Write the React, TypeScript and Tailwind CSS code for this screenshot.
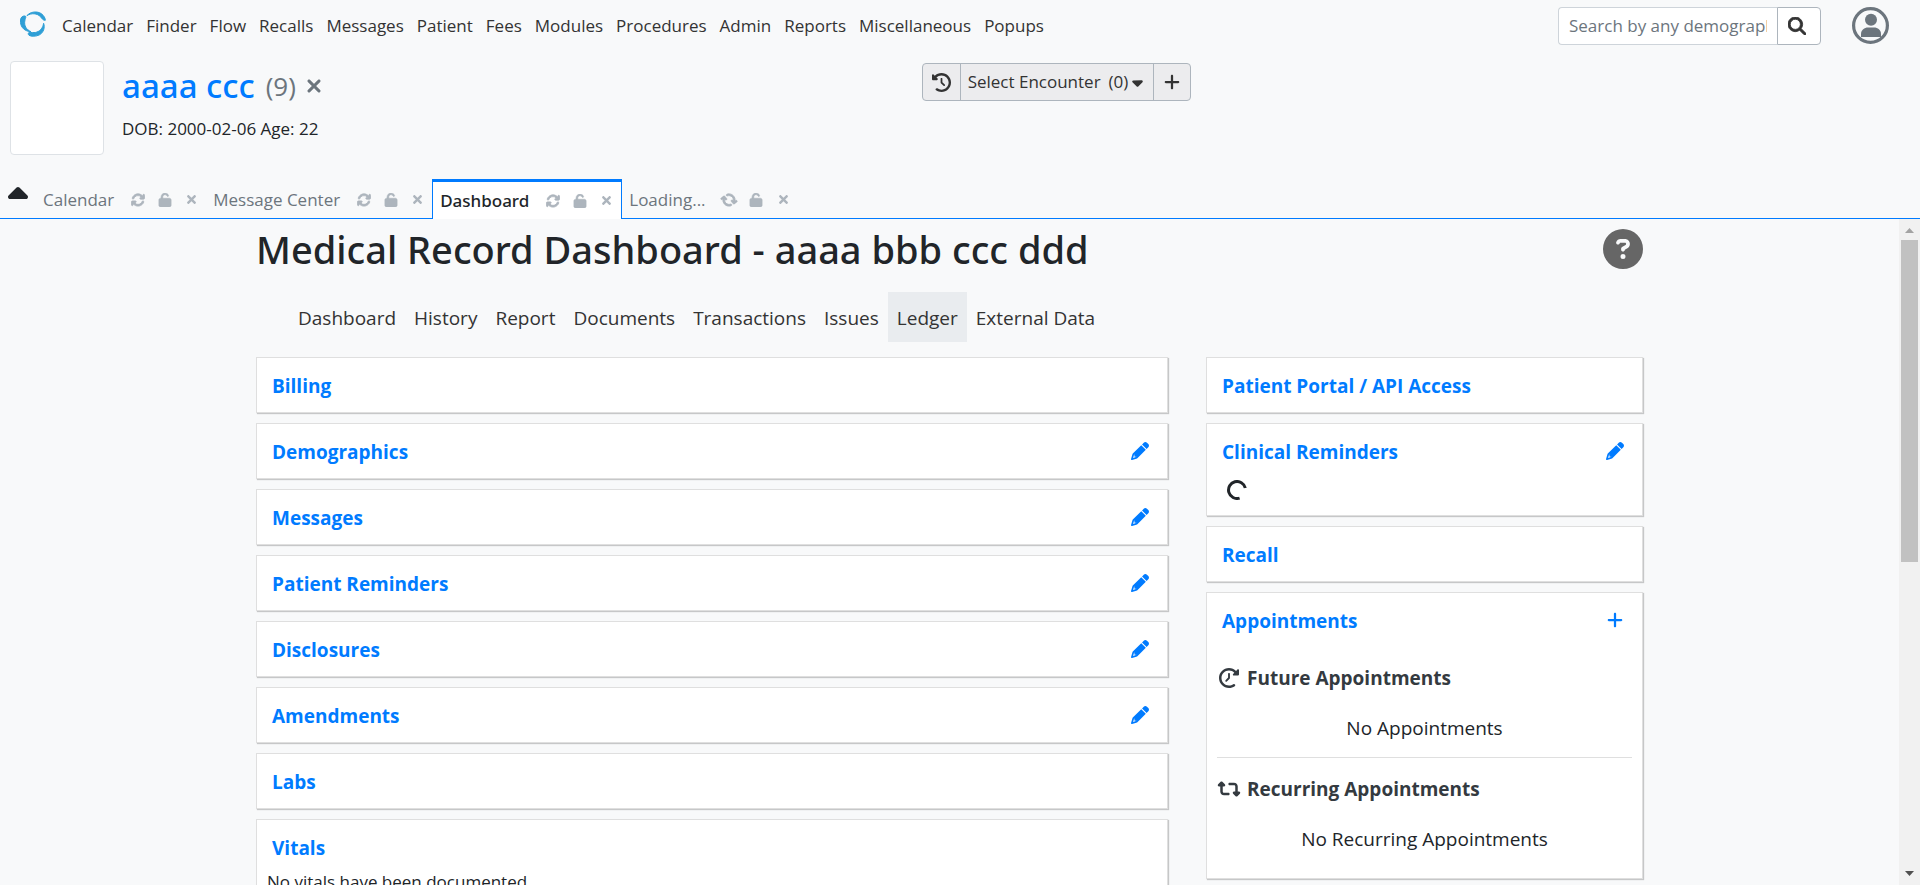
import React from "react";
import { FaTimes } from "react-icons/fa";
import {
  FaArrowsRotate,
  FaCaretDown,
  FaCaretUp,
  FaCircleQuestion,
  FaClockRotateLeft,
  FaMagnifyingGlass,
  FaPlus,
  FaRetweet,
  FaUnlock,
  FaXmark,
} from "react-icons/fa6";

const menuItems = [
  "Calendar", "Finder", "Flow", "Recalls", "Messages", "Patient", "Fees",
  "Modules", "Procedures", "Admin", "Reports", "Miscellaneous", "Popups",
];

const tabs = [
  { label: "Calendar", active: false, loading: false },
  { label: "Message Center", active: false, loading: false },
  { label: "Dashboard", active: true, loading: false },
  { label: "Loading...", active: false, loading: true },
];

const sections = [
  "Dashboard", "History", "Report", "Documents", "Transactions", "Issues", "Ledger", "External Data",
];

const leftCards = [
  { title: "Billing", editable: false },
  { title: "Demographics", editable: true },
  { title: "Messages", editable: true },
  { title: "Patient Reminders", editable: true },
  { title: "Disclosures", editable: true },
  { title: "Amendments", editable: true },
  { title: "Labs", editable: false },
];

function Logo() {
  return (
    <svg viewBox="0 0 26 26" className="mb-1 size-[26px] shrink-0 fill-[#2f9fd6] stroke-[#2f9fd6] stroke-1" aria-hidden="true">
      <path d="M7 4.600C10 .600 17.500-.200 21.500 2.800C24 4.800 25.400 7.400 25.300 9.300C23 9.500 22.300 7.800 20.500 5.700C17.300 2.200 11.300 1.800 7 4.600Z" />
      <path d="M3.800 5C1.200 5.300 .200 7.900.500 11.500C.900 16.500 4.800 20.400 11 20.700C6.200 18.600 4 14.600 4.800 10C5.100 7.900 6 6.600 5.800 5.500C5.500 4.900 4.600 4.900 3.800 5Z" />
      <path d="M23.600 12.300C25.200 16.300 23.600 21.600 19.500 23.800C16 25.700 11 25.600 9 24.300C7.700 23.200 8.200 21.400 9.700 21.300C11.500 21.300 13 21.900 15.300 21.500C19.800 20.600 22.900 17.300 23.600 12.300Z" />
    </svg>
  );
}

function Avatar() {
  return (
    <svg viewBox="0 0 37 37" className="size-[37px]" aria-hidden="true">
      <circle cx="18.500" cy="18.500" r="16.900" fill="none" stroke="#6c757d" strokeWidth="3.200" />
      <circle cx="19" cy="12.800" r="6" fill="#6c757d" />
      <path d="M9 30v-3c0-4 3.500-6.500 7-6.500h6c3.800 0 7 2.500 7 6.500v3Z" fill="#6c757d" />
    </svg>
  );
}

function Pencil() {
  return (
    <svg viewBox="0 0 512 512" className="size-[18px] fill-current" aria-hidden="true">
      <path d="M421.700 220.300L188.500 453.400L154.600 419.500L158.100 416H112C103.200 416 96 408.800 96 400V353.900L92.500 357.400C87.800 362.200 84.300 368 82.400 374.400L59.400 452.600L137.600 429.600C143.100 427.700 149.800 424.200 154.600 419.500L188.500 453.400C178.100 463.800 165.200 471.500 151.100 475.600L30.800 511C22.400 513.500 13.200 511.200 7 504.100C.8 498.800-1.500 489.700 1 481.200L36.400 360.900C40.500 346.800 48.200 333.900 58.600 323.500L291.700 90.300L421.700 220.300zM492.700 58.800C517.700 83.700 517.700 124.300 492.700 149.300L444.300 197.700L314.300 67.700L362.700 19.300C387.700-5.700 428.300-5.700 453.300 19.300L492.700 58.800z" />
    </svg>
  );
}

function Card({ title, action, children }: { title: string; action?: "edit" | "add"; children?: React.ReactNode }) {
  return (
    <section className="border border-[#dfdfdf] bg-white shadow-[1px_1px_1px_rgba(0,0,0,0.2)]">
      <div className="flex h-[54px] items-center justify-between pt-[2px] pr-[18px] pl-[15px]">
        <h2 className="text-[19px] leading-7 font-bold text-[#007bff]">
          <a href="#">{title}</a>
        </h2>
        {action && (
          <button type="button" aria-label={`${action} ${title}`} className="mb-[2px] text-[18px] text-[#007bff]">
            {action === "edit" ? <Pencil /> : <FaPlus />}
          </button>
        )}
      </div>
      {children}
    </section>
  );
}

export default function App() {
  return (
    <div className="flex h-screen flex-col overflow-hidden bg-[#f8f9fa] font-['Open_Sans','Noto_Sans',sans-serif] text-[17px] text-[#212529]">
      <header className="flex h-[51px] shrink-0 items-center pr-[31px] pl-5">
        <Logo />
        <nav className="ml-4 flex flex-1 gap-[13px] leading-6 text-[#333]">
          {menuItems.map((item) => (
            <a key={item} href="#">{item}</a>
          ))}
        </nav>
        <form className="flex h-[38px]">
          <input
            type="text"
            aria-label="Search by any demographics"
            placeholder="Search by any demographics"
            className="w-[219px] rounded-l border border-r-0 border-[#ced4da] bg-white px-[10px] placeholder:text-[#6c757d]"
          />
          <button type="button" aria-label="Search" className="flex w-[44px] items-center justify-center rounded-r border border-[#adb5bd] bg-white pr-1 text-[18px] text-[#333]">
            <FaMagnifyingGlass className="stroke-[24]" />
          </button>
        </form>
        <button type="button" aria-label="Account" className="ml-[31px]">
          <Avatar />
        </button>
      </header>

      <div className="grid shrink-0 grid-cols-[912px_1fr] pt-[10px]">
        <div className="flex h-[94px] pl-[10px]">
          <div className="size-[94px] rounded border border-[#dee2e6] bg-white" />
          <div className="pt-[3px] pl-[18px]">
            <div className="flex h-11 items-center">
              <a href="#" className="font-['Noto_Sans'] text-[33px] font-medium text-[#007bff]">aaaa ccc</a>
              <span className="ml-[11px] text-[26px] text-[#6c757d]">(9)</span>
              <button type="button" aria-label="Close patient" className="ml-2 text-[20px] text-[#6c757d]">
                <FaXmark className="stroke-[16]" />
              </button>
            </div>
            <p className="mt-[9px] leading-6">DOB: 2000-02-06 Age: 22</p>
          </div>
        </div>
        <div className="flex pt-[2px] pl-[10px]">
          <div className="flex h-[38px] rounded border border-[#adb5bd] bg-[#ececee] text-[#333]">
            <button type="button" aria-label="Encounter history" className="flex w-[38px] items-center justify-center border-r border-[#adb5bd] text-[19px]">
              <FaClockRotateLeft />
            </button>
            <button type="button" className="flex w-[193px] items-center justify-center border-r border-[#adb5bd] whitespace-nowrap">
              Select Encounter<span className="ml-2">(0)</span>
              <FaCaretDown className="ml-px text-[17px]" />
            </button>
            <button type="button" aria-label="New encounter" className="flex w-[36px] items-center justify-center text-[18px]">
              <FaPlus />
            </button>
          </div>
        </div>
      </div>

      <div className="mt-6 flex h-10 shrink-0 border-b border-[#007bff]">
        <button type="button" aria-label="Collapse" className="flex w-[36px] justify-center text-[32px]">
          <FaCaretUp />
        </button>
        {tabs.map((tab) => (
          <div
            key={tab.label}
            className={
              tab.active
                ? "-mb-px flex items-center border border-t-[3px] border-b-0 border-[#007bff] bg-white px-[7px] font-['Noto_Sans'] font-medium"
                : "flex items-center px-[7px] pt-[3px] text-[#6c757d]"
            }
          >
            <a href="#">{tab.label}</a>
            <div className="-mr-[6px] ml-[10px] flex text-[14px] text-[#adb5bd]">
              <button type="button" aria-label={`Refresh ${tab.label}`} className="flex w-[27px] justify-center">
                <FaArrowsRotate className={tab.loading ? "rotate-[50deg] stroke-[30]" : "stroke-[30]"} />
              </button>
              <button type="button" aria-label={`Lock ${tab.label}`} className="flex w-[27px] justify-center">
                <FaUnlock className="stroke-[20]" />
              </button>
              <button type="button" aria-label={`Close ${tab.label}`} className="flex w-[27px] justify-center text-[13px]">
                <FaTimes />
              </button>
            </div>
          </div>
        ))}
      </div>

      <div className="flex min-h-0 flex-1">
        <main className="min-w-0 flex-1 overflow-hidden pr-[256px] pl-[256px]">
          <div className="flex h-[73px] items-start justify-between pt-[10px]">
            <h1 className="-mt-1 font-['Noto_Sans'] text-[38px] leading-[48px] font-medium">Medical Record Dashboard - aaaa bbb ccc ddd</h1>
            <button type="button" aria-label="Help" className="text-[40px] text-[#666]">
              <FaCircleQuestion />
            </button>
          </div>
          <nav className="flex h-[50px] pl-[33px] text-[19px] text-[#333]">
            {sections.map((name) => (
              <a
                key={name}
                href="#"
                className={name === "Ledger" ? "flex items-center bg-[#e9ecef] px-[9px] pt-[2px]" : "flex items-center px-[9px] pt-[2px]"}
              >
                {name}
              </a>
            ))}
          </nav>
          <div className="mt-[15px] grid grid-cols-[912fr_437fr] items-start gap-[38px] text-[19px]">
            <div className="flex flex-col gap-[10px]">
              {leftCards.map((card) => (
                <Card key={card.title} title={card.title} action={card.editable ? "edit" : undefined} />
              ))}
              <Card title="Vitals">
                <p className="-mt-2 h-24 px-[10px] text-[17px] leading-8">No vitals have been documented.</p>
              </Card>
            </div>
            <div className="flex flex-col gap-[10px]">
              <Card title="Patient Portal / API Access" />
              <Card title="Clinical Reminders" action="edit">
                <div className="h-[37px] pt-[2px] pl-5">
                  <svg viewBox="0 0 20 20" className="size-5" role="status" aria-label="Loading">
                    <path d="M12.600 18.100A8.500 8.500 0 1 1 18.300 8" fill="none" stroke="#212529" strokeWidth="3" />
                  </svg>
                </div>
              </Card>
              <Card title="Recall" />
              <Card title="Appointments" action="add">
                <div className="px-[10px] pb-[10px]">
                  <h3 className="flex h-[62px] items-center gap-[6px] text-[19px] font-bold text-[#343a40]">
                    <FaClockRotateLeft className="w-6 -scale-x-100 text-[20px]" />
                    Future Appointments
                  </h3>
                  <p className="h-[48px] text-center leading-[38px]">No Appointments</p>
                  <hr className="border-[#dfdfdf]" />
                  <h3 className="flex h-[62px] items-center gap-[6px] text-[19px] font-bold text-[#343a40]">
                    <FaRetweet className="w-6 text-[20px]" />
                    Recurring Appointments
                  </h3>
                  <p className="h-[48px] text-center leading-[38px]">No Recurring Appointments</p>
                </div>
              </Card>
            </div>
          </div>
        </main>
        <div className="flex w-[21px] flex-col items-center bg-[#f1f1f1]" aria-hidden="true">
          <svg viewBox="0 0 21 21" className="h-[21px] w-full fill-[#a3a3a3]">
            <path d="M6 14h9l-4.500-5z" />
          </svg>
          <div className="h-[322px] w-[17px] bg-[#c1c1c1]" />
          <div className="flex-1" />
          <svg viewBox="0 0 21 21" className="h-[21px] w-full fill-[#505050]">
            <path d="M6 7h9l-4.500 5z" />
          </svg>
        </div>
      </div>
    </div>
  );
}
